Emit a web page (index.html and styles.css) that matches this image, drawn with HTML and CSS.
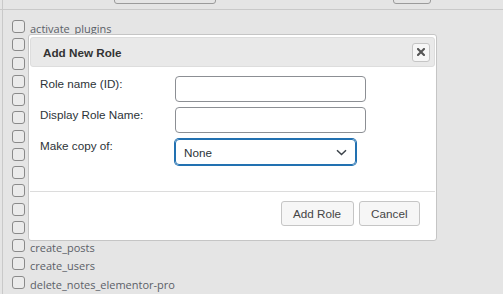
FILE: index.html
```html
<!DOCTYPE html>
<html lang="en">
<head>
<meta charset="utf-8">
<title>Add New Role</title>
<link rel="stylesheet" href="styles.css">
</head>
<body>
<div class="toolbar">
  <span class="tb-btn tb-wide"></span>
  <span class="tb-btn tb-small"></span>
</div>
<ul class="caps">
  <li class="cap"><span class="box"></span><span>activate_plugins</span></li>
  <li class="cap"><span class="box"></span></li>
  <li class="cap"><span class="box"></span></li>
  <li class="cap"><span class="box"></span></li>
  <li class="cap"><span class="box"></span></li>
  <li class="cap"><span class="box"></span></li>
  <li class="cap"><span class="box"></span></li>
  <li class="cap"><span class="box"></span></li>
  <li class="cap"><span class="box"></span></li>
  <li class="cap"><span class="box"></span></li>
  <li class="cap"><span class="box"></span></li>
  <li class="cap"><span class="box"></span></li>
  <li class="cap"><span class="box"></span><span>create_posts</span></li>
  <li class="cap"><span class="box"></span><span>create_users</span></li>
  <li class="cap"><span class="box"></span><span>delete_notes_elementor-pro</span></li>
</ul>

<div class="dialog">
  <div class="titlebar">
    <span class="title">Add New Role</span>
    <button class="close" type="button" aria-label="Close">
      <svg width="8" height="8" viewBox="0 0 8 8"><path d="M1 1L7 7M7 1L1 7" stroke="#555" stroke-width="2.1" stroke-linecap="square"/></svg>
    </button>
  </div>
  <div class="content">
    <div class="form">
      <label class="lbl">Role name (ID):</label>
      <span class="field"></span>
      <label class="lbl">Display Role Name:</label>
      <span class="field"></span>
      <label class="lbl">Make copy of:</label>
      <div class="select">
        <span>None</span>
        <svg width="11" height="7" viewBox="0 0 11 7"><path d="M1 1.2L5.5 5.5L10 1.2" fill="none" stroke="#3c434a" stroke-width="1.5"/></svg>
      </div>
    </div>
  </div>
  <div class="pane">
    <button class="btn" type="button">Add Role</button>
    <button class="btn" type="button">Cancel</button>
  </div>
</div>
</body>
</html>
```
FILE: styles.css
```css
* { box-sizing: border-box; }
html, body { margin: 0; padding: 0; }
body {
  width: 503px;
  height: 294px;
  overflow: hidden;
  background: linear-gradient(#c9c9c9, #c9c9c9) 2px 0 / 1px 100% no-repeat, #e5e5e5;
  font-family: "Liberation Sans", Arial, sans-serif;
}

.toolbar {
  height: 10px;
  border-bottom: 1px solid #c9c9c9;
  display: flex;
  align-items: flex-end;
  padding: 0 0 5px 114px;
  overflow: hidden;
}
.tb-btn {
  display: block;
  height: 24px;
  flex: none;
  border: 1px solid #9b9b9b;
  border-radius: 3px;
}
.tb-wide { width: 102px; }
.tb-small { width: 38px; margin-left: 177px; }

.caps {
  list-style: none;
  margin: 0;
  padding: 10px 0 0 12px;
  font-family: "Open Sans", "Noto Sans", sans-serif;
  font-size: 11px;
  line-height: 18.25px;
  color: #5b6067;
}
.cap {
  display: flex;
  align-items: flex-start;
  gap: 5px;
  height: 18.25px;
}
.box {
  width: 13px;
  height: 13px;
  flex: none;
  border: 1px solid #8a8a8a;
  border-radius: 3px;
  background: #ebebeb;
}

.dialog {
  position: absolute;
  left: 28px;
  top: 34px;
  width: 409px;
  height: 207px;
  background: #fff;
  border: 1px solid #c5c5c5;
  border-radius: 3px;
  padding: 2px 1px;
  display: flex;
  flex-direction: column;
  font-size: 11.7px;
}
.titlebar {
  height: 30px;
  flex: none;
  background: #e9e9e9;
  border: 1px solid #dddddd;
  border-radius: 3px;
  display: flex;
  align-items: center;
  justify-content: space-between;
  padding: 0 4px 0 12px;
}
.title {
  font-weight: bold;
  color: #333;
}
.close {
  width: 18px;
  height: 19px;
  padding: 0;
  margin: 0;
  border: 1px solid #c5c5c5;
  border-radius: 3px;
  background: #f6f6f6;
  display: flex;
  align-items: center;
  justify-content: center;
}

.content {
  flex: 1;
  padding: 9px 0 0 10px;
}
.form {
  display: grid;
  grid-template-columns: 135px auto;
  row-gap: 5px;
  justify-content: start;
}
.lbl {
  color: #2c3338;
  line-height: 14px;
  padding-top: 1px;
}
.field {
  display: block;
  width: 191px;
  height: 26px;
  border: 1px solid #8c8f94;
  border-radius: 4px;
  background: #fff;
}
.select {
  width: 181px;
  height: 26px;
  margin-top: 1px;
  border: 1px solid #2271b1;
  box-shadow: 0 0 0 1px #2271b1;
  border-radius: 4px;
  display: flex;
  align-items: center;
  justify-content: space-between;
  padding: 0 8px;
  color: #2c3338;
}

.pane {
  flex: none;
  border-top: 1px solid #dcdcdc;
  padding: 9px 15px 12px 0;
  display: flex;
  justify-content: flex-end;
  gap: 5px;
}
.btn {
  height: 25px;
  padding: 0 11.5px;
  margin: 0;
  border: 1px solid #c5c5c5;
  border-radius: 3px;
  background: #f6f6f6;
  color: #454545;
  font-family: "Liberation Sans", Arial, sans-serif;
  font-size: 11.7px;
}
```
